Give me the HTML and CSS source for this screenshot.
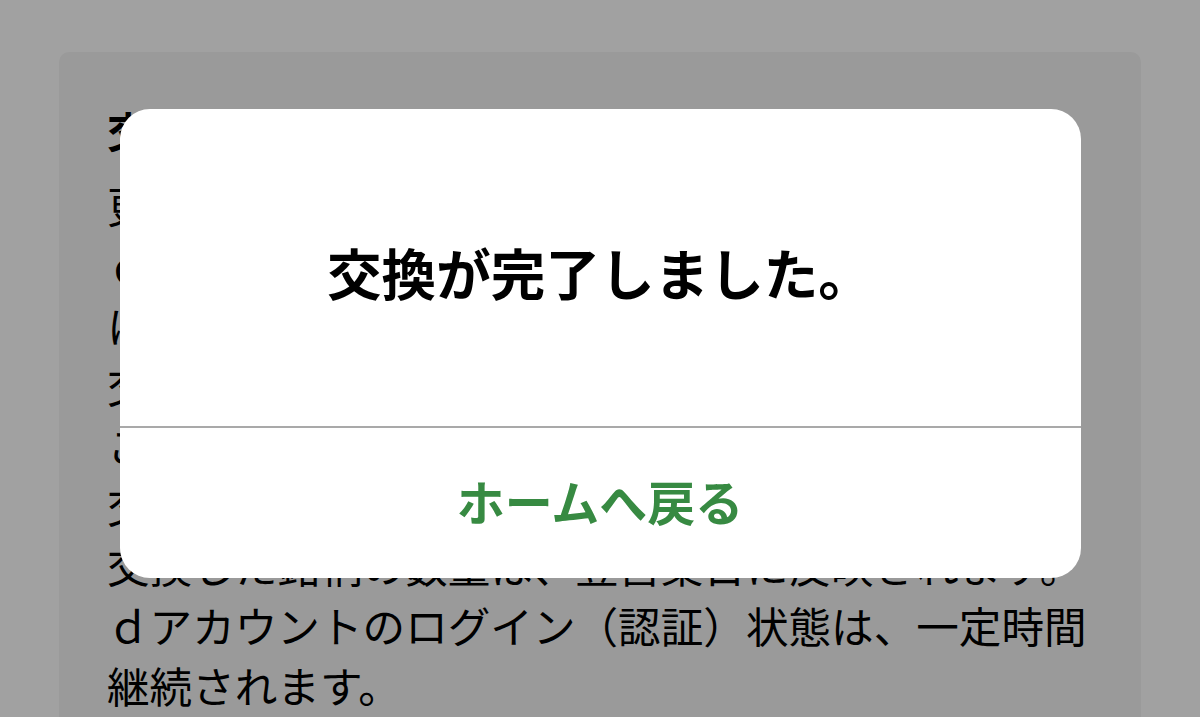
FILE: index.html
```html
<!DOCTYPE html>
<html lang="ja">
<head>
<meta charset="utf-8">
<title>交換完了</title>
<link rel="stylesheet" href="styles.css">
</head>
<body>
<main class="page">
  <section class="card">
    <h2 class="card-title">交換に関するご注意</h2>
    <p class="note">更新までに時間がかかる場合があります。</p>
    <p class="note">ｄポイントは交換完了後、翌月までに順次口座<br>に反映されます。</p>
    <p class="note">交換状況はマイページからご確認いただけます。</p>
    <p class="note">こちらの画面を閉じても交換は完了しています。</p>
    <p class="note">交換後の取消・変更はできません。</p>
    <p class="note">交換した銘柄の数量は、翌営業日に反映されます。</p>
    <p class="note">ｄアカウントのログイン（認証）状態は、一定時間継続されます。</p>
  </section>
</main>
<div class="overlay">
  <div class="dialog" role="dialog" aria-modal="true">
    <div class="dialog-body">
      <p class="dialog-title">交換が完了しました。</p>
    </div>
    <div class="dialog-actions">
      <button class="dialog-btn" type="button">ホームへ戻る</button>
    </div>
  </div>
</div>
</body>
</html>
```
FILE: styles.css
```css
html, body {
  margin: 0;
  padding: 0;
  height: 100%;
  overflow: hidden;
}
body {
  background: #ffffff;
  font-family: "Noto Sans CJK JP", "Noto Sans", sans-serif;
  color: #000;
}
.page {
  padding: 52px 59px 0;
}
.card {
  background: #f4f4f4;
  border-radius: 10px;
  padding: 48px 48px 40px;
  min-height: 700px;
}
.card-title {
  margin: 0 0 15px;
  font-size: 42.6px;
  line-height: 60px;
  font-weight: 700;
}
.note {
  margin: 0;
  font-size: 42.6px;
  line-height: 60px;
  font-weight: 400;
}
.overlay {
  position: fixed;
  inset: 0;
  background: rgba(0, 0, 0, 0.37);
  display: flex;
  justify-content: center;
  align-items: flex-start;
  padding-top: 109px;
}
.dialog {
  width: 961px;
  height: 469px;
  background: #ffffff;
  border-radius: 30px;
  display: flex;
  flex-direction: column;
  overflow: hidden;
}
.dialog-body {
  height: 317px;
  display: flex;
  align-items: center;
  justify-content: center;
  border-bottom: 2px solid #a9a9a9;
}
.dialog-title {
  margin: 0;
  font-size: 54.6px;
  font-weight: 700;
  line-height: 1.2;
  letter-spacing: 0;
  padding-top: 8px;
}
.dialog-actions {
  flex: 1;
  display: flex;
  align-items: center;
  justify-content: center;
}
.dialog-btn {
  background: none;
  border: none;
  padding: 0 0 4px;
  margin: 0;
  font-family: "Noto Sans CJK JP", "Noto Sans", sans-serif;
  font-size: 48px;
  font-weight: 700;
  color: #378a42;
  line-height: 1.2;
  cursor: pointer;
}
```
